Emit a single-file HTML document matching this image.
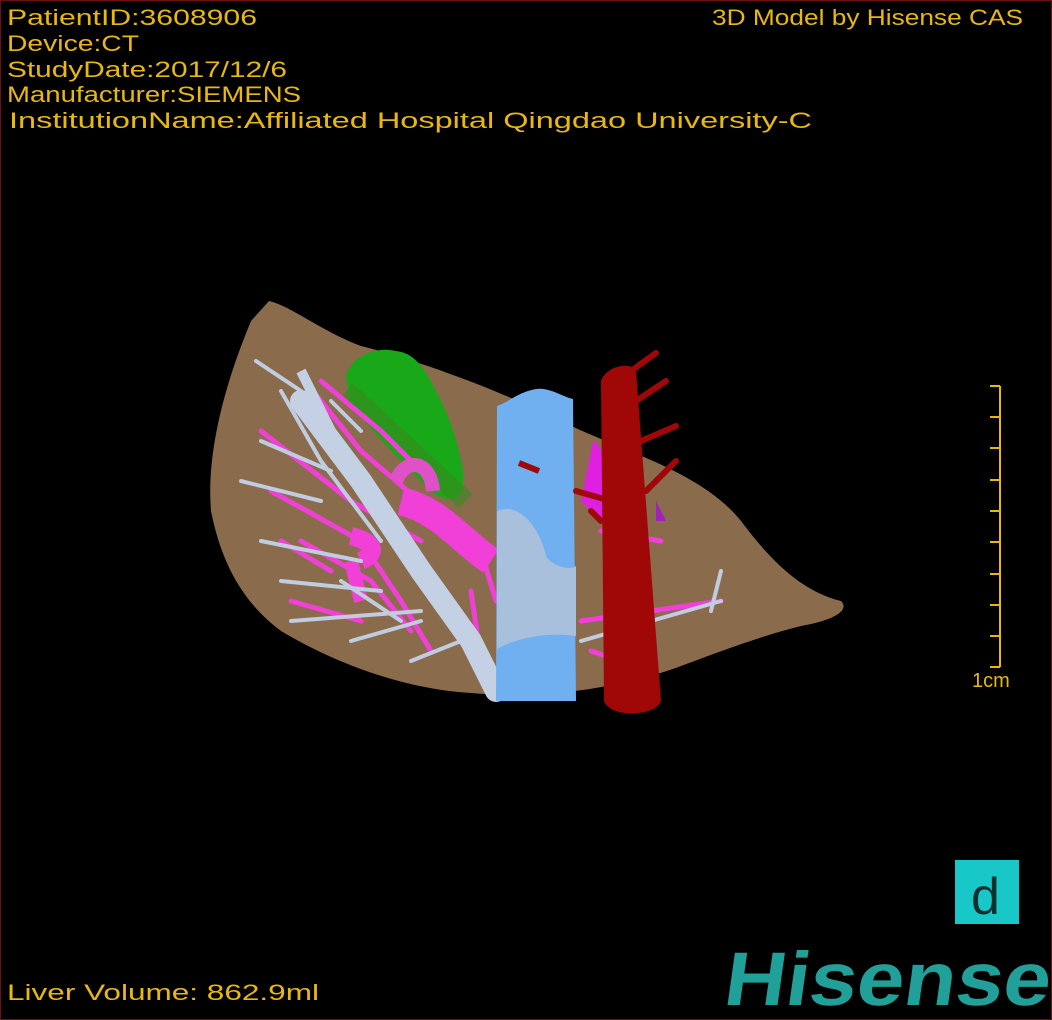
<!DOCTYPE html>
<html><head><meta charset="utf-8"><style>
html,body{margin:0;padding:0;background:#000;}
#c{position:relative;width:1050px;height:1018px;border:1px solid #6a1010;overflow:hidden;background:#000;}
</style></head><body><div id="c">
<svg width="1050" height="1018" style="position:absolute;left:0;top:0">
<g fill="#e8b810" font-family="Liberation Sans, sans-serif" font-size="22">
<text x="6" y="24" textLength="250" lengthAdjust="spacingAndGlyphs">PatientID:3608906</text>
<text x="6" y="50" textLength="132" lengthAdjust="spacingAndGlyphs">Device:CT</text>
<text x="6" y="76" textLength="280" lengthAdjust="spacingAndGlyphs">StudyDate:2017/12/6</text>
<text x="6" y="101" textLength="294" lengthAdjust="spacingAndGlyphs">Manufacturer:SIEMENS</text>
<text x="8" y="127" textLength="803" lengthAdjust="spacingAndGlyphs">InstitutionName:Affiliated Hospital Qingdao University-C</text>
<text x="711" y="24" textLength="311" lengthAdjust="spacingAndGlyphs">3D Model by Hisense CAS</text>
<text x="6" y="999" textLength="312" lengthAdjust="spacingAndGlyphs">Liver Volume:  862.9ml</text>
</g>
<path d="M268,300 C290,305 320,330 360,345 C420,360 500,390 560,420 C620,450 700,470 740,520 C770,560 800,590 840,600 C850,610 830,620 800,625 C760,635 720,650 680,665 C640,680 560,700 470,692 C400,688 330,660 280,630 C240,600 220,560 210,510 C205,450 225,380 250,320 Z" fill="#8a6c4c"/>
<path d="M345,375 C350,355 375,345 395,350 C415,352 425,370 435,390 C445,410 455,430 462,470 C465,500 450,505 430,490 C400,460 370,430 348,400 Z" fill="#18a818"/>
<path d="M345,390 C380,420 420,460 465,500" stroke="#3a8a20" stroke-width="20" fill="none" opacity="0.6"/>
<g stroke="#f040d8" stroke-width="5" fill="none" stroke-linecap="round">
<path d="M300,375 L360,450 L430,510 L480,550 L495,600"/><path d="M260,430 L350,500 L420,540"/>
<path d="M270,490 L360,540 L400,600 L430,650"/><path d="M320,380 L380,430 L420,470"/>
<path d="M300,540 L370,580 L410,630"/><path d="M290,600 L360,620"/>
<path d="M470,590 L480,660"/><path d="M580,620 L720,600"/><path d="M600,530 L660,540"/>
<path d="M590,650 L620,660"/><path d="M330,570 L280,540"/>
</g>
<path d="M395,480 C405,455 430,460 432,490" stroke="#e050c8" stroke-width="14" fill="none"/>
<path d="M400,500 C440,510 460,540 490,560" stroke="#f040d8" stroke-width="28" fill="none"/>
<path d="M350,535 C370,540 380,550 360,560" stroke="#f040d8" stroke-width="18" fill="none"/>
<path d="M350,560 L360,600" stroke="#f040d8" stroke-width="14"/>
<g stroke="#c0cce0" stroke-width="4" fill="none" stroke-linecap="round">
<path d="M255,360 L300,390 L330,430"/><path d="M280,390 L320,460 L380,540"/>
<path d="M260,440 L330,470"/><path d="M240,480 L320,500"/><path d="M260,540 L360,560"/>
<path d="M280,580 L380,590"/><path d="M290,620 L420,610"/><path d="M350,640 L420,620"/>
<path d="M400,620 L340,580"/><path d="M410,660 L460,640"/><path d="M330,400 L360,430"/>
<path d="M580,640 L720,600"/><path d="M720,570 L710,610"/>
</g>
<path d="M300,400 L360,480 L420,570 L470,640 L495,690" stroke="#c4d0e4" stroke-width="22" fill="none" stroke-linecap="round"/>
<path d="M300,370 L330,430" stroke="#c4d0e4" stroke-width="10" fill="none"/>
<path d="M496,405 C510,400 515,392 535,388 C548,386 560,395 572,398 L575,700 L495,700 Z" fill="#70b0f0"/>
<path d="M496,510 C520,500 540,530 545,555 C550,565 570,570 575,565 L575,635 C540,630 510,640 496,648 Z" fill="#a8c0dc"/>
<path d="M592,440 C600,440 610,480 620,500 L600,520 L580,500 Z" fill="#e020e0"/>
<path d="M655,500 L665,520 L655,520 Z" fill="#a020c0"/>
<path d="M600,380 C605,365 630,360 635,370 L660,700 C655,715 610,718 603,700 Z" fill="#a00808"/>
<g stroke="#a00808" stroke-width="6" fill="none" stroke-linecap="round">
<path d="M630,370 L655,352"/><path d="M635,400 L665,380"/><path d="M640,440 L675,425"/>
<path d="M645,490 L675,460"/><path d="M610,500 L575,490"/><path d="M600,520 L590,510"/>
</g>
<path d="M518,462 L538,470" stroke="#a00808" stroke-width="6"/>
<g stroke="#e8b810" stroke-width="2">
<line x1="999" y1="385" x2="999" y2="666"/>
<line x1="989" y1="385" x2="999" y2="385"/><line x1="989" y1="416" x2="999" y2="416"/>
<line x1="989" y1="447" x2="999" y2="447"/><line x1="989" y1="479" x2="999" y2="479"/>
<line x1="989" y1="510" x2="999" y2="510"/><line x1="989" y1="541" x2="999" y2="541"/>
<line x1="989" y1="573" x2="999" y2="573"/><line x1="989" y1="604" x2="999" y2="604"/>
<line x1="989" y1="635" x2="999" y2="635"/><line x1="989" y1="666" x2="999" y2="666"/>
</g>
<text x="971" y="686" fill="#e8b810" font-family="Liberation Sans" font-size="20">1cm</text>
<rect x="954" y="859" width="64" height="64" fill="#18c8c8"/>
<text x="970" y="913" fill="#103030" font-family="Liberation Sans" font-size="52">d</text>
<text x="722" y="1004" fill="#20a098" font-family="Liberation Sans" font-weight="bold" font-size="76" transform="skewX(-8) translate(140,0)" textLength="326" lengthAdjust="spacingAndGlyphs">Hisense</text>
</svg>
</div></body></html>
